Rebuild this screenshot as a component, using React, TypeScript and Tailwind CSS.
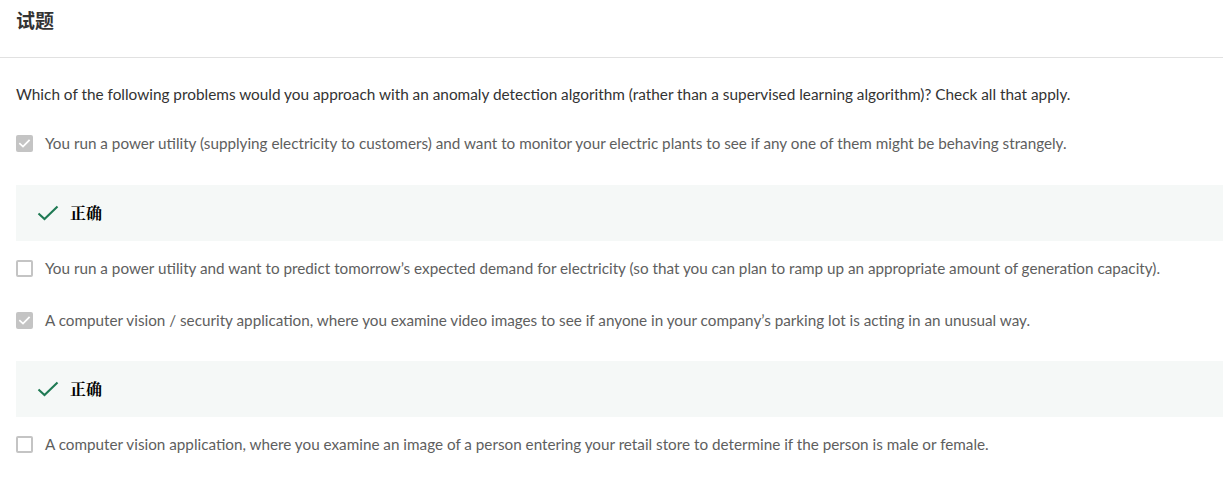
import React from "react";

const font = { fontFamily: '"Source Sans Pro", Lato, "Noto Sans CJK SC", sans-serif' };

function Checked() {
  return (
    <span className="flex h-[17px] w-[17px] shrink-0 items-center justify-center rounded-[2px] bg-[#c4c4c4]">
      <svg width="13" height="13" viewBox="0 0 13 13" fill="none">
        <path d="M2 6.8 L5 9.6 L11 3.4" stroke="#fff" strokeWidth="1.8" strokeLinecap="square" />
      </svg>
    </span>
  );
}

function Unchecked() {
  return <span className="block h-[17px] w-[17px] shrink-0 rounded-[2px] border-2 border-[#c4c4c4] bg-white" />;
}

function Option({ checked, text }: { checked: boolean; text: string }) {
  return (
    <div className="flex h-[20px] items-center gap-[12px] pl-[16px]">
      {checked ? <Checked /> : <Unchecked />}
      <span className="text-[15.25px] text-[#5e5e5e]">{text}</span>
    </div>
  );
}

function Correct() {
  return (
    <div className="ml-[16px] flex h-[56px] items-center bg-[#f5f8f7] pl-[21px]">
      <svg width="22" height="16" viewBox="0 0 22 16" fill="none">
        <path d="M1.5 8.5 L7.5 14 L20.5 1.5" stroke="#1f7a54" strokeWidth="2.1" />
      </svg>
      <span
        className="ml-[11px] text-[16px] font-bold text-black"
        style={{ fontFamily: '"Noto Serif CJK SC", "Noto Sans CJK SC", serif' }}
      >
        正确
      </span>
    </div>
  );
}

export default function App() {
  return (
    <div className="h-[484px] w-[1223px] overflow-hidden bg-white" style={font}>
      <div className="flex h-[58px] items-center border-b border-[#e1e1e1] pb-[16px] pl-[16px]">
        <h2
          className="text-[19px] font-bold text-[#333]"
          style={{ fontFamily: '"Noto Sans CJK SC", sans-serif' }}
        >
          试题
        </h2>
      </div>
      <p className="mt-[26px] pl-[16px] text-[15.35px] leading-[20px] text-[#333]">
        Which of the following problems would you approach with an anomaly detection algorithm (rather than a supervised learning algorithm)? Check all that apply.
      </p>
      <div className="mt-[29px]">
        <Option checked text="You run a power utility (supplying electricity to customers) and want to monitor your electric plants to see if any one of them might be behaving strangely." />
      </div>
      <div className="mt-[32px]">
        <Correct />
      </div>
      <div className="mt-[17px]">
        <Option checked={false} text="You run a power utility and want to predict tomorrow’s expected demand for electricity (so that you can plan to ramp up an appropriate amount of generation capacity)." />
      </div>
      <div className="mt-[32px]">
        <Option checked text="A computer vision / security application, where you examine video images to see if anyone in your company’s parking lot is acting in an unusual way." />
      </div>
      <div className="mt-[31px]">
        <Correct />
      </div>
      <div className="mt-[17px]">
        <Option checked={false} text="A computer vision application, where you examine an image of a person entering your retail store to determine if the person is male or female." />
      </div>
    </div>
  );
}
